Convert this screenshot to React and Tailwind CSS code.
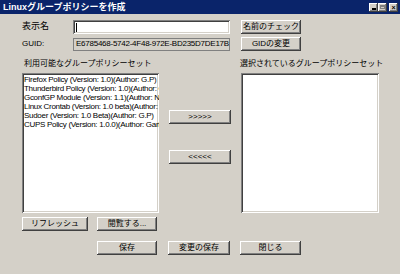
import React from "react";

const font = { fontFamily: '"Liberation Sans", "Noto Sans CJK JP", sans-serif' };

const raised =
  "bg-[#d4d0c8] shadow-[inset_-1px_-1px_#404040,inset_1px_1px_#ffffff,inset_-2px_-2px_#808080,inset_2px_2px_#d4d0c8]";
const sunken =
  "shadow-[inset_1px_1px_#808080,inset_-1px_-1px_#ffffff,inset_2px_2px_#404040,inset_-2px_-2px_#d4d0c8]";

function Btn({ children, className = "" }) {
  return (
    <button
      className={`${raised} h-[14px] flex items-center justify-center text-[8px] leading-none text-black whitespace-nowrap ${className}`}
    >
      {children}
    </button>
  );
}

const policies = [
  "Firefox Policy (Version: 1.0)(Author: G.P)",
  "Thunderbird Policy (Version: 1.0)(Author: G.P)",
  "GconfGP Module (Version: 1.1)(Author: Nick)",
  "Linux Crontab (Version: 1.0 beta)(Author: G.P)",
  "Sudoer (Version: 1.0 Beta)(Author: G.P)",
  "CUPS Policy (Version: 1.0.0)(Author: Garfield)",
];

export default function App() {
  return (
    <div className="w-[400px] h-[274px] bg-[#d4d0c8] flex flex-col overflow-hidden" style={font}>
      <div className="h-[14px] bg-[#0a246a] flex items-center justify-between pl-[3px] pr-[2px]">
        <span className="text-white font-bold text-[9px] leading-none">Linuxグループポリシーを作成</span>
        <div className="flex items-center">
          <div className={`${raised} w-[9px] h-[9px] flex items-end justify-center pb-[2px]`}>
            <div className="w-[4px] h-[2px] bg-black" />
          </div>
          <div className={`${raised} w-[9px] h-[9px] flex items-center justify-center`}>
            <div className="w-[5px] h-[4px] border border-t-2 border-[#808080]" />
          </div>
          <div className={`${raised} w-[9px] h-[9px] ml-[2px] flex items-center justify-center text-[7px] font-bold leading-none`}>
            ×
          </div>
        </div>
      </div>

      <div className="pl-[22px] pt-[6px] flex flex-col">
        <div className="flex items-center h-[14px]">
          <span className="w-[51px] text-[9px] text-black">表示名</span>
          <div className={`${sunken} bg-white w-[157px] h-[14px] flex items-center pl-[3px]`}>
            <div className="w-px h-[9px] bg-black" />
          </div>
          <Btn className="ml-[11px] w-[60px]">名前のチェック</Btn>
        </div>
        <div className="flex items-center h-[14px] mt-[3px]">
          <span className="w-[51px] text-[8px] text-black">GUID:</span>
          <div className="border border-[#808080] bg-[#d4d0c8] w-[157px] h-[13px] flex items-center pl-[2px] text-[8px] text-black leading-none whitespace-nowrap overflow-hidden tracking-[-0.25px]">
            E6785468-5742-4F48-972E-BD235D7DE17B
          </div>
          <Btn className="ml-[11px] w-[60px]">GIDの変更</Btn>
        </div>

        <div className="flex h-[12px] mt-[7px] items-center text-[8px] text-black">
          <span className="w-[218px] pl-[2px]">利用可能なグループポリシーセット</span>
          <span>選択されているグループポリシーセット</span>
        </div>

        <div className="flex mt-[3px]">
          <div className={`${sunken} bg-white w-[137px] h-[140px] pl-[2px] pt-[2px] overflow-hidden`}>
            {policies.map((p) => (
              <div key={p} className="text-[8px] leading-[9px] text-black whitespace-nowrap tracking-[-0.3px]">
                {p}
              </div>
            ))}
          </div>
          <div className="w-[82px] flex flex-col items-center">
            <Btn className="w-[62px] mt-[37px]">&gt;&gt;&gt;&gt;&gt;</Btn>
            <Btn className="w-[62px] mt-[26px]">&lt;&lt;&lt;&lt;&lt;</Btn>
          </div>
          <div className={`${sunken} bg-white w-[138px] h-[140px]`} />
        </div>

        <div className="flex mt-[4px]">
          <Btn className="w-[66px]">リフレッシュ</Btn>
          <Btn className="w-[60px] ml-[9px]">閲覧する...</Btn>
        </div>

        <div className="flex mt-[10px] pl-[75px]">
          <Btn className="w-[60px]">保存</Btn>
          <Btn className="w-[62px] ml-[11px]">変更の保存</Btn>
          <Btn className="w-[61px] ml-[10px]">閉じる</Btn>
        </div>
      </div>
    </div>
  );
}
